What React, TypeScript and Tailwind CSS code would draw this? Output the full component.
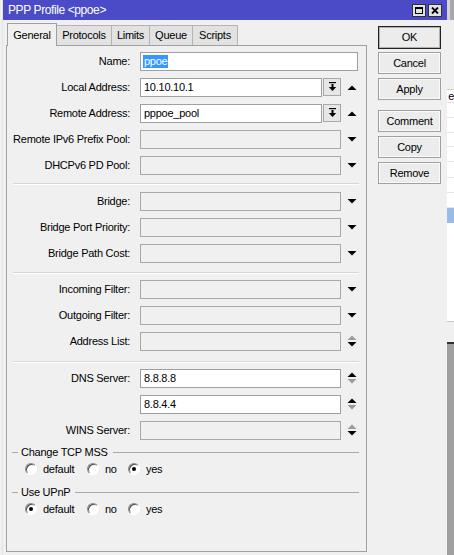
import React from "react";

type Arrow = "up" | "down" | "spinA" | "spinB" | "none";
type Kind = "name" | "combo" | "dis" | "edit";
type RowT = { label: string; kind: Kind; value?: string; arrow: Arrow };

const Tri = ({ dir, color }: { dir: "up" | "down"; color: string }) => (
  <svg width="10" height="5" viewBox="0 0 10 5" className="block">
    {dir === "up" ? (
      <polygon points="0.5,5 9.5,5 5,0.5" fill={color} />
    ) : (
      <polygon points="0.5,0 9.5,0 5,4.5" fill={color} />
    )}
  </svg>
);

const ArrowCell = ({ arrow }: { arrow: Arrow }) => (
  <div className="ml-[5px] w-[11px] flex flex-col items-center justify-center">
    {arrow === "up" && <Tri dir="up" color="#000" />}
    {arrow === "down" && <Tri dir="down" color="#000" />}
    {arrow === "spinA" && (
      <div className="flex flex-col gap-[2px]">
        <Tri dir="up" color="#9a9a9a" />
        <Tri dir="down" color="#000" />
      </div>
    )}
    {arrow === "spinB" && (
      <div className="flex flex-col gap-[2px]">
        <Tri dir="up" color="#000" />
        <Tri dir="down" color="#9a9a9a" />
      </div>
    )}
  </div>
);

const DropIcon = () => (
  <svg width="9" height="10" viewBox="0 0 9 10" className="block">
    <rect x="1" y="0" width="7" height="1.2" fill="#000" />
    <rect x="3.5" y="2" width="2" height="3.5" fill="#000" />
    <polygon points="0.8,5 8.2,5 4.5,9" fill="#000" />
  </svg>
);

const FormRow = ({ r }: { r: RowT }) => (
  <div className="h-[26px] flex items-center">
    <div className="w-[123px] text-right whitespace-nowrap text-black">{r.label}</div>
    <div className="ml-[10px] flex items-center">
      {r.kind === "name" && (
        <div className="w-[218px] h-[19px] border border-[#a0a0a0] bg-white flex items-center pl-[2px]">
          <span className="bg-[#3399ff] text-white px-[1px] leading-[13px]">ppoe</span>
        </div>
      )}
      {r.kind === "combo" && (
        <>
          <div className="w-[182px] h-[19px] border border-[#a0a0a0] bg-white flex items-center pl-[3px] text-black">
            {r.value}
          </div>
          <div className="ml-[1px] w-[18px] h-[18px] border border-[#a8a8a8] bg-[#e6e6e6] flex items-center justify-center">
            <DropIcon />
          </div>
        </>
      )}
      {r.kind === "dis" && (
        <div className="w-[201px] h-[19px] border border-[#a8a8a8] bg-[#f0f0f0]" />
      )}
      {r.kind === "edit" && (
        <div className="w-[201px] h-[19px] border border-[#a0a0a0] bg-white flex items-center pl-[3px] text-black">
          {r.value}
        </div>
      )}
      {r.kind !== "name" && <ArrowCell arrow={r.arrow} />}
    </div>
  </div>
);

const Sep = ({ h }: { h: string }) => (
  <div className={h}>
    <div className="ml-[6px] mr-[7px] h-[2px] border-t border-[#d6d6d6] border-b border-b-white" />
  </div>
);

const Radio = ({ checked }: { checked?: boolean }) => (
  <div className="w-[12px] h-[12px] rounded-full border border-t-[#8a8a8a] border-l-[#8a8a8a] border-r-white border-b-white bg-white shadow-[inset_1px_1px_0_#505050] flex items-center justify-center">
    {checked && <div className="w-[4px] h-[4px] rounded-full bg-black" />}
  </div>
);

const GroupHeader = ({ title, cls }: { title: string; cls: string }) => (
  <div className={`${cls} h-[14px] flex items-center`}>
    <div className="ml-[5px] w-[6px] h-px bg-[#a8a8a8]" />
    <div className="ml-[3px] whitespace-nowrap text-black">{title}</div>
    <div className="ml-[5px] mr-[7px] flex-1 h-px bg-[#a8a8a8]" />
  </div>
);

const Radios = ({ sel }: { sel: number }) => (
  <div className="mt-[2px] h-[16px] flex items-center ml-[18px] text-black">
    <div className="w-[62px] flex items-center">
      <Radio checked={sel === 0} />
      <span className="ml-[6px]">default</span>
    </div>
    <div className="w-[41px] flex items-center">
      <Radio checked={sel === 1} />
      <span className="ml-[6px]">no</span>
    </div>
    <div className="flex items-center">
      <Radio checked={sel === 2} />
      <span className="ml-[6px]">yes</span>
    </div>
  </div>
);

const Btn = ({ label, cls, def }: { label: string; cls: string; def?: boolean }) => (
  <div
    className={`${cls} w-[63px] flex items-center justify-center text-black ${
      def
        ? "border border-[#222] bg-[#ececec] shadow-[inset_0_0_0_1px_#b0b0b0]"
        : "border border-[#a0a0a0] bg-[#ececec] shadow-[inset_0_0_0_1px_#fafafa]"
    }`}
  >
    {label}
  </div>
);

export default function App() {
  const s1: RowT[] = [
    { label: "Name:", kind: "name", arrow: "none" },
    { label: "Local Address:", kind: "combo", value: "10.10.10.1", arrow: "up" },
    { label: "Remote Address:", kind: "combo", value: "pppoe_pool", arrow: "up" },
    { label: "Remote IPv6 Prefix Pool:", kind: "dis", arrow: "down" },
    { label: "DHCPv6 PD Pool:", kind: "dis", arrow: "down" },
  ];
  const s2: RowT[] = [
    { label: "Bridge:", kind: "dis", arrow: "down" },
    { label: "Bridge Port Priority:", kind: "dis", arrow: "down" },
    { label: "Bridge Path Cost:", kind: "dis", arrow: "down" },
  ];
  const s3: RowT[] = [
    { label: "Incoming Filter:", kind: "dis", arrow: "down" },
    { label: "Outgoing Filter:", kind: "dis", arrow: "down" },
    { label: "Address List:", kind: "dis", arrow: "spinA" },
  ];
  const s4: RowT[] = [
    { label: "DNS Server:", kind: "edit", value: "8.8.8.8", arrow: "spinB" },
    { label: "", kind: "edit", value: "8.8.4.4", arrow: "spinB" },
    { label: "WINS Server:", kind: "dis", arrow: "spinA" },
  ];

  return (
    <div className="w-[454px] h-[555px] flex overflow-hidden bg-[#f0f0f0] font-['Liberation_Sans',Arial,sans-serif] text-[11px] tracking-[-0.25px] leading-none">
      {/* left strip */}
      <div className="w-[3px] h-full bg-[#f0f0f0] border-r border-[#e4e4e4]" />

      {/* window */}
      <div className="w-[444px] h-full flex flex-col bg-[#f0f0f0]">
        <div className="h-[20px] bg-[#4b4bc8] flex items-center pl-[5px] pr-[5px]">
          <div className="text-white text-[12px] tracking-[-0.4px] flex-1 whitespace-nowrap">
            PPP Profile &lt;ppoe&gt;
          </div>
          <div className="w-[14px] h-[13px] border border-[#303030] bg-[#e2e2e2] flex items-center justify-center">
            <svg width="8" height="7" viewBox="0 0 8 7" className="block">
              <rect x="0.5" y="0.5" width="7" height="6" fill="none" stroke="#000" strokeWidth="1" />
              <rect x="0" y="0" width="8" height="2" fill="#000" />
            </svg>
          </div>
          <div className="ml-[2px] w-[14px] h-[13px] border border-[#303030] bg-[#e2e2e2] flex items-center justify-center">
            <svg width="8" height="7" viewBox="0 0 8 7" className="block">
              <path d="M1 0.5 L7 6.5 M7 0.5 L1 6.5" stroke="#000" strokeWidth="1.8" />
            </svg>
          </div>
        </div>

        <div className="flex-1 flex">
          {/* tabs + panel */}
          <div className="ml-[3px] mt-[3px] mb-[3px] w-[361px] flex flex-col">
            <div className="h-[22px] flex items-end ml-[1px]">
              <div className="relative z-10 -mb-px w-[50px] h-[23px] border-l border-t border-r border-[#a0a0a0] bg-[#f0f0f0] flex items-center justify-center text-black">
                General
              </div>
              {[
                ["Protocols", "w-[55px]"],
                ["Limits", "w-[38px]"],
                ["Queue", "w-[43px]"],
                ["Scripts", "w-[45px]"],
              ].map(([t, w]) => (
                <div
                  key={t}
                  className={`${w} h-[20px] border-t border-r border-[#b4b4b4] bg-[#e2e2e2] flex items-center justify-center text-black`}
                >
                  {t}
                </div>
              ))}
            </div>
            <div className="flex-1 border border-[#a0a0a0] bg-[#f0f0f0] pt-[2px] flex flex-col">
              {s1.map((r) => (
                <FormRow key={r.label} r={r} />
              ))}
              <Sep h="h-[10px] pt-[5px]" />
              {s2.map((r) => (
                <FormRow key={r.label} r={r} />
              ))}
              <Sep h="h-[10px] pt-[6px]" />
              {s3.map((r) => (
                <FormRow key={r.label} r={r} />
              ))}
              <Sep h="h-[11px] pt-[7px]" />
              {s4.map((r, i) => (
                <FormRow key={i} r={r} />
              ))}
              <GroupHeader title="Change TCP MSS" cls="mt-[2px]" />
              <Radios sel={2} />
              <GroupHeader title="Use UPnP" cls="mt-[8px]" />
              <Radios sel={0} />
            </div>
          </div>

          {/* buttons */}
          <div className="ml-[11px] mt-[6px] flex flex-col">
            <Btn label="OK" cls="h-[23px]" def />
            <Btn label="Cancel" cls="mt-[3px] h-[22px]" />
            <Btn label="Apply" cls="mt-[4px] h-[22px]" />
            <Btn label="Comment" cls="mt-[10px] h-[22px]" />
            <Btn label="Copy" cls="mt-[4px] h-[22px]" />
            <Btn label="Remove" cls="mt-[4px] h-[22px]" />
          </div>
        </div>
      </div>

      {/* right strip: window behind */}
      <div className="w-[7px] h-full flex flex-col overflow-hidden">
        <div className="h-[20px] flex">
          <div className="w-[3px] bg-[#d4d4d4]" />
          <div className="flex-1 bg-[#a8a8a8]" />
        </div>
        <div className="flex-1 flex">
          <div className="w-[1px] bg-black" />
          <div className="flex-1 flex flex-col bg-white">
            <div className="h-[70px] bg-[#f0f0f0] border-b border-[#d0d0d0]" />
            <div className="h-[13px] bg-white border-b border-[#e0e0e0] overflow-hidden text-black pl-[1px] flex items-center">e</div>
            <div className="h-[15px] border-b border-[#e6e6e6]" />
            <div className="h-[15px] border-b border-[#e6e6e6]" />
            <div className="h-[14px] border-b border-[#e6e6e6]" />
            <div className="h-[15px] border-b border-[#e6e6e6]" />
            <div className="h-[16px] border-b border-[#e6e6e6]" />
            <div className="h-[15px] border-b border-[#e6e6e6]" />
            <div className="h-[15px] border-b border-[#e6e6e6]" />
            <div className="h-[15px] bg-[#99bbe8]" />
            <div className="h-[99px] bg-white border-b border-[#c8c8c8]" />
            <div className="h-[22px] bg-[#f0f0f0] border-b-2 border-[#303030]" />
            <div className="flex-1 bg-[#a0a0a0]" />
          </div>
        </div>
      </div>
    </div>
  );
}
